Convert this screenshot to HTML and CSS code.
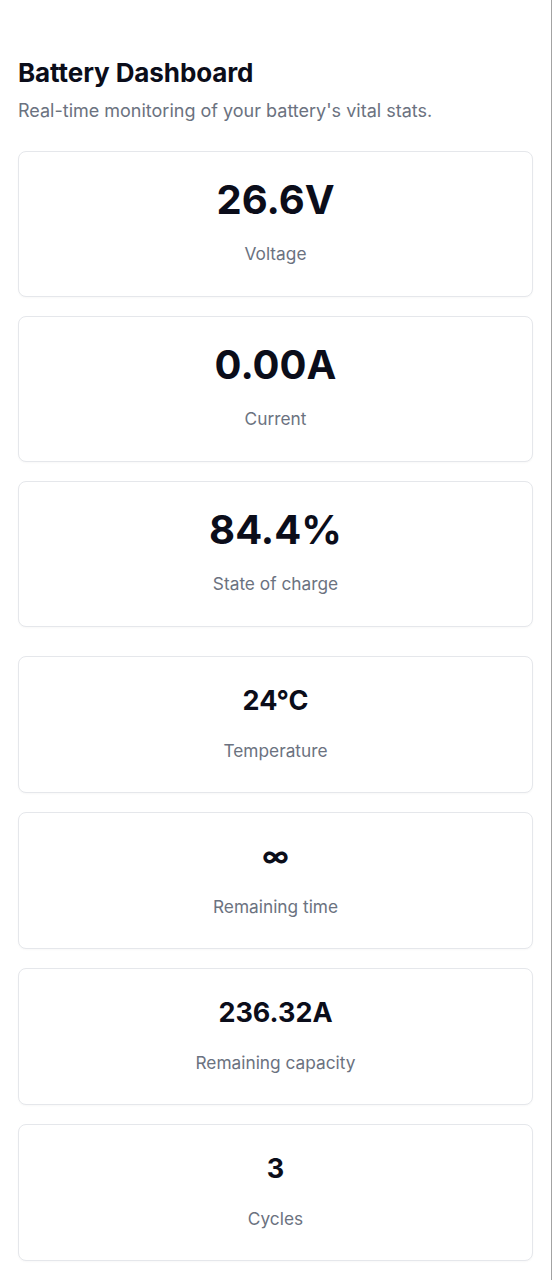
FILE: index.html
```html
<!DOCTYPE html>
<html lang="en">
<head>
<meta charset="utf-8">
<title>Battery Dashboard</title>
<link rel="stylesheet" href="styles.css">
</head>
<body>
<main class="page">
  <header class="header">
    <h1 class="title">Battery Dashboard</h1>
    <p class="subtitle">Real-time monitoring of your battery's vital stats.</p>
  </header>
  <section class="group group-main">
    <div class="card"><div class="value">26.6V</div><div class="label">Voltage</div></div>
    <div class="card"><div class="value">0.00A</div><div class="label">Current</div></div>
    <div class="card"><div class="value">84.4%</div><div class="label">State of charge</div></div>
  </section>
  <section class="group group-secondary">
    <div class="card"><div class="value">24°C</div><div class="label">Temperature</div></div>
    <div class="card"><div class="value">∞</div><div class="label">Remaining time</div></div>
    <div class="card"><div class="value">236.32A</div><div class="label">Remaining capacity</div></div>
    <div class="card"><div class="value">3</div><div class="label">Cycles</div></div>
  </section>
</main>
</body>
</html>
```

FILE: styles.css
```css
* { box-sizing: border-box; }
html, body { margin: 0; padding: 0; background: #ffffff; }
body { font-family: Inter, "Noto Sans", "Liberation Sans", sans-serif; color: #0b0d1a; }

.page {
  min-height: 100vh;
  border-right: 1px solid #a3a3a3;
  padding: 57px 18px 40px 18px;
}

.title {
  margin: 0;
  font-size: 26px;
  line-height: 32px;
  font-weight: 700;
  letter-spacing: -0.1px;
  color: #0b0d1a;
}

.subtitle {
  margin: 8px 0 0 0;
  font-size: 18px;
  line-height: 28px;
  color: #6b7280;
}

.group {
  display: flex;
  flex-direction: column;
  gap: 19px;
}
.group-main { margin-top: 26px; }
.group-secondary { margin-top: 29px; }

.card {
  border: 1px solid #e5e7eb;
  border-radius: 8px;
  background: #fff;
  box-shadow: 0 1px 2px rgba(0,0,0,0.03);
  padding: 24px 16px 28px 16px;
  text-align: center;
}
.group-secondary .card { padding-bottom: 27px; }

.value {
  font-size: 40px;
  line-height: 48px;
  font-weight: 700;
  color: #0b0d1a;
}
.group-secondary .value {
  font-size: 27px;
  line-height: 40px;
}

.label {
  margin-top: 16px;
  font-size: 17.3px;
  line-height: 28px;
  color: #6b7280;
}
```
